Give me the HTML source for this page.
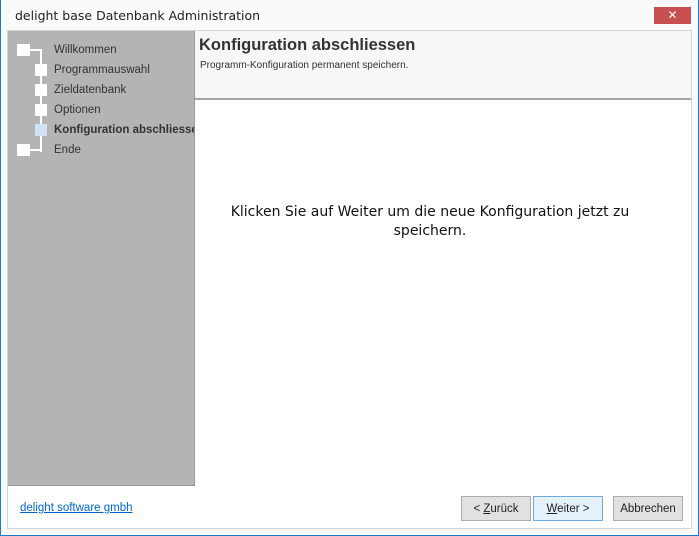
<!DOCTYPE html>
<html><head><meta charset="utf-8"><style>
*{margin:0;padding:0;box-sizing:border-box}
body{width:699px;height:536px;overflow:hidden;background:#fafafa;font-family:"Liberation Sans",sans-serif;position:relative}
.abs{position:absolute}
.win{left:0;top:0;width:699px;height:536px;border:1px solid #1a7ad4;border-top:none}
.title{left:15px;top:8px;color:#222;font-family:"DejaVu Sans",sans-serif;font-size:12.5px}
.close{left:654px;top:7px;width:37px;height:17px;background:#c75050;color:#fff;font-size:12px;text-align:center;line-height:17px}
.content{left:7px;top:30px;width:685px;height:499px;border:1px solid #d5d5d5;background:#fff}
.side{left:8px;top:31px;width:187px;height:455px;background:#b4b4b4;border-right:1px solid #999;border-bottom:1px solid #999;overflow:hidden}
.hdr{left:195px;top:31px;width:496px;height:69px;background:#f7f7f7;border-bottom:2px solid #a5a5a5}
.item{position:absolute;left:46px;color:#333;font-family:"Liberation Sans",sans-serif;font-size:11.5px;white-space:nowrap}
.sq{position:absolute;background:#fff}
.btn{position:absolute;top:496px;width:70px;height:25px;border:1px solid #adadad;background:#e1e1e1;font-family:"Liberation Sans",sans-serif;font-size:11.5px;text-align:center;line-height:24px;color:#222}
</style></head><body>
<div class="abs win"></div>
<div class="abs title">delight base Datenbank Administration</div>
<div class="abs close">✕</div>
<div class="abs content"></div>
<div class="abs side">
  <div class="sq" style="left:32px;top:19px;width:2px;height:102px"></div>
  <div class="sq" style="left:20px;top:18px;width:14px;height:2px"></div>
  <div class="sq" style="left:20px;top:118px;width:14px;height:2px"></div>
  <div class="sq" style="left:9px;top:13px;width:13px;height:12px"></div>
  <div class="sq" style="left:27px;top:33px;width:12px;height:12px"></div>
  <div class="sq" style="left:27px;top:53px;width:12px;height:12px"></div>
  <div class="sq" style="left:27px;top:73px;width:12px;height:12px"></div>
  <div class="sq" style="left:27px;top:93px;width:12px;height:12px;background:#cfe3f5"></div>
  <div class="sq" style="left:9px;top:113px;width:13px;height:12px"></div>
  <div class="item" style="top:13px">Willkommen</div>
  <div class="item" style="top:33px">Programmauswahl</div>
  <div class="item" style="top:53px">Zieldatenbank</div>
  <div class="item" style="top:73px">Optionen</div>
  <div class="item" style="top:93px;font-weight:bold">Konfiguration abschliessen</div>
  <div class="item" style="top:113px">Ende</div>
</div>
<div class="abs hdr">
  <div class="abs" style="left:4px;top:5px;font-size:16.5px;font-weight:bold;color:#333">Konfiguration abschliessen</div>
  <div class="abs" style="left:5px;top:29px;font-size:10px;color:#333">Programm-Konfiguration permanent speichern.</div>
</div>
<div class="abs" style="left:210px;top:203px;width:440px;text-align:center;line-height:19px;color:#111;font-family:'DejaVu Sans',sans-serif;font-size:14px">Klicken Sie auf Weiter um die neue Konfiguration jetzt zu speichern.</div>
<div class="abs" style="left:20px;top:502px;color:#0066cc;text-decoration:underline;font-family:'Liberation Sans',sans-serif;font-size:11.5px">delight software gmbh</div>
<div class="btn" style="left:461px">&lt; <u>Z</u>urück</div>
<div class="btn" style="left:533px;background:#e5f1fb;border-color:#6fa8dc"><u>W</u>eiter &gt;</div>
<div class="btn" style="left:613px">Abbrechen</div>
</body></html>
